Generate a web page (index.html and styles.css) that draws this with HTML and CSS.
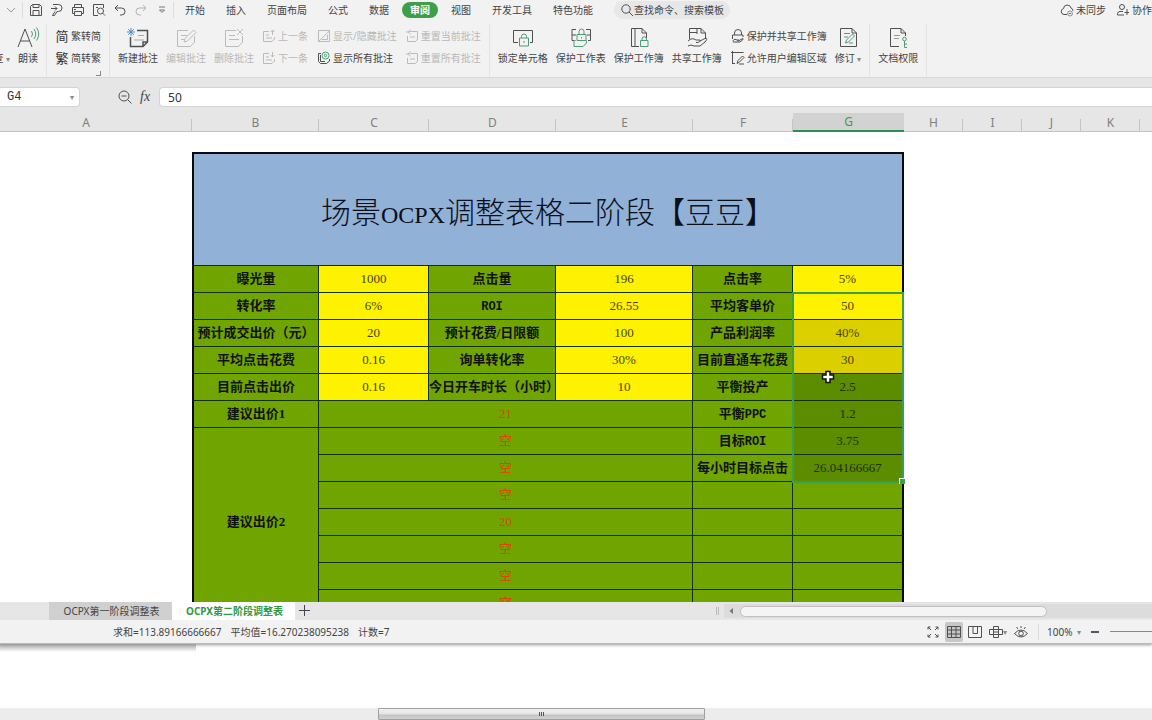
FILE: index.html
```html
<!DOCTYPE html>
<html lang="zh-CN">
<head>
<meta charset="utf-8">
<title>OCPX调整表</title>
<link rel="stylesheet" href="styles.css">
</head>
<body>
<main class="app">
  <header class="menubar">
    <div class="quick">
      <button class="qbtn" aria-label="更多"><svg viewBox="0 0 14 14"><path d="M3 5l4 4 4-4" stroke="#999"/></svg></button>
      <i class="vline"></i>
      <button class="qbtn" aria-label="保存"><svg viewBox="0 0 14 14"><path d="M1.5 12.500V3.500L3.500 1.500H10.500L12.500 3.500V12.500ZM4 1.500V4.500H10V1.500M4 12.500V7.500H10V12.500"/></svg></button>
      <button class="qbtn" aria-label="输出"><svg viewBox="0 0 14 14"><path d="M3 1.500H8.500A3.500 3.500 0 0 1 8.500 8.500H7L4.500 12.500H2.500L5 8.500M1 5.500H7M5 3.500L7 5.500L5 7.500"/></svg></button>
      <button class="qbtn" aria-label="打印"><svg viewBox="0 0 14 14"><path d="M3.500 4.500V1.500H10.500V4.500M3.500 10.500H1.500V4.500H12.500V10.500H10.500M3.500 8.500H10.500V12.500H3.500ZM3 6.500H5"/></svg></button>
      <button class="qbtn" aria-label="打印预览"><svg viewBox="0 0 14 14"><path d="M6 12.500H1.500V1.500H11.500V5M4 4.500H6"/><circle cx="8.500" cy="8" r="3"/><path d="M10.700 10.200L13 12.500"/></svg></button>
      <button class="qbtn" aria-label="撤销"><svg viewBox="0 0 14 14"><path d="M5 2L2 5L5 8M2 5H8.500A3.500 3.500 0 0 1 8.500 12H7"/></svg></button>
      <button class="qbtn faded" aria-label="恢复"><svg viewBox="0 0 14 14"><path d="M9 2L12 5L9 8M12 5H5.500A3.500 3.500 0 0 0 5.500 12H7"/></svg></button>
      <button class="qbtn" aria-label="自定义"><svg viewBox="0 0 14 14"><path d="M4 4H10M4.500 7L7 9.500L9.500 7Z" stroke="#777"/></svg></button>
      <i class="vline"></i>
    </div>
    <nav class="tabs">
      <a href="#">开始</a><a href="#">插入</a><a href="#">页面布局</a><a href="#">公式</a><a href="#">数据</a><a href="#" class="active">审阅</a><a href="#">视图</a><a href="#">开发工具</a><a href="#">特色功能</a>
      <button class="search"><svg viewBox="0 0 14 14"><circle cx="6" cy="6" r="4.200"/><path d="M9 9L13 13"/></svg>查找命令、搜索模板</button>
    </nav>
    <div class="account">
      <button><svg viewBox="0 0 14 14"><path d="M7 11.500H4A3 3 0 0 1 3.500 5.600A3.800 3.800 0 0 1 11 5A3 3 0 0 1 13 8"/><circle cx="10" cy="10.500" r="2.500" stroke="#8a8aa8"/><path d="M8.700 10.500H11.300" stroke="#6a6a98"/></svg>未同步</button>
      <button><svg viewBox="0 0 14 14"><circle cx="6" cy="4" r="2.500"/><path d="M8 12H1.500V10.500A2.500 2.500 0 0 1 4 8.500H7M11 6V12M8.500 9.500H13"/></svg>协作</button>
    </div>
  </header>

  <section class="ribbon" aria-label="审阅">
    <button class="big cut"><span class="icon"></span><span>查 <small>▾</small></span></button>
    <button class="big"><svg viewBox="0 0 24 24"><path d="M2 21L9 3L16 21M4.500 15H13.500"/><path class="g" d="M15.500 5Q17.500 8 15.500 11M18 3Q21.500 8 18 13M20.500 1.500Q25 8 20.500 14.500"/></svg><span>朗读</span></button>
    <i class="sep"></i>
    <div class="stack corner">
      <button><b class="glyph">简</b>繁转简</button>
      <button><b class="glyph">繁</b>简转繁</button>
    </div>
    <i class="sep"></i>
    <button class="big"><svg viewBox="0 0 24 24"><path d="M11 4.500H21.500V16L17 20.500H4.500V11M17 20.500V16H21.500" stroke-width="1.500"/><path d="M12 9.500H18M8 14H18" stroke="#aaa"/><path stroke="#4a90d0" d="M5 2V10M1 6H9M2.200 3.200L7.800 8.800M7.800 3.200L2.200 8.800"/></svg><span>新建批注</span></button>
    <button class="big" disabled><svg viewBox="0 0 24 24"><path d="M14 4.500H3.500V20.500H16.500L20.500 16V10M7 9.500H13M7 13.500H10M10 16L11 12.500L19.500 4L22 6.500L13.500 15Z"/></svg><span>编辑批注</span></button>
    <button class="big" disabled><svg viewBox="0 0 24 24"><path d="M14 4.500H3.500V20.500H16.500L20.500 16V10M7 9.500H13M7 13.500H17M15 3L21 9M21 3L15 9"/></svg><span>删除批注</span></button>
    <div class="stack">
      <button disabled><svg viewBox="0 0 14 14"><path d="M7 2.500H1.500V12.500H10L12.500 10V8M4 6H7M4 9H10M10.500 6V1M8.500 3L10.500 1L12.500 3"/></svg>上一条</button>
      <button disabled><svg viewBox="0 0 14 14"><path d="M7 2.500H1.500V12.500H10L12.500 10V8M4 6H7M4 9H10M10.500 1V6M8.500 4L10.500 6L12.500 4"/></svg>下一条</button>
    </div>
    <div class="stack wide">
      <button disabled><svg viewBox="0 0 14 14"><path d="M1.500 1.500H12.500V12.500H1.500ZM1.500 12.500L12.500 2M5 10.500H10.500V6"/></svg>显示/隐藏批注</button>
      <button><svg viewBox="0 0 14 14"><path d="M4 2.500H1.500V10.500L3.500 12.500H9.500L12.500 10V8M3.500 4V10.500H8"/><circle class="g" cx="8.500" cy="4.500" r="3.500"/><circle class="g" cx="8.500" cy="4.500" r="1.200"/></svg>显示所有批注</button>
    </div>
    <div class="stack">
      <button disabled><svg viewBox="0 0 14 14"><path d="M4.500 2.500H12.500V10L10.500 12.500H2.500V7M5.500 .500L3 3L5.500 5M3 3H1M5 8H10"/></svg>重置当前批注</button>
      <button disabled><svg viewBox="0 0 14 14"><path d="M4.500 2.500H12.500V10L10.500 12.500H2.500V7M5.500 .500L3 3L5.500 5M3 3H1M5 8H10"/></svg>重置所有批注</button>
    </div>
    <i class="sep"></i>
    <button class="big"><svg viewBox="0 0 24 24"><path d="M7 16.500H2.500V4.500H21.500V16.500H19"/><path class="g f" d="M8.500 12H17.500V20H8.500ZM10.500 12V10.500A2.500 2.500 0 0 1 15.500 10.500V12M13 15V17"/></svg><span>锁定单元格</span></button>
    <button class="big"><svg viewBox="0 0 24 24"><path d="M7 3.500H3V14.500H7M17 3.500H21.500V14.500H19M3 9H7M18 9H21.500"/><path class="g f" d="M8 8.500H17V14.500H8ZM10 8.500V5.500A2.500 2.500 0 0 1 15 5.500V8.500M5 14.500V20.500H14L17.500 17V14.500M12.500 11V12.500"/></svg><span>保护工作表</span></button>
    <button class="big"><svg viewBox="0 0 24 24"><path d="M12 20.500H4.500V2.500H15L19.500 7V12M8 2.500V20M15 2.500V7H19.500"/><path class="g f" d="M13.500 14.500H21V20.500H13.500ZM15 14.500V13A2.200 2.200 0 0 1 19.500 13V14.500"/></svg><span>保护工作簿</span></button>
    <button class="big"><svg viewBox="0 0 24 24"><path d="M4.500 13V2.500H16L20.500 7V13M12 2.500V8M4.500 6.500H12M16 2.500V7H20.500M3 15Q7 11 11 14H15Q16 16.500 11 16.500M15 15L21 12Q23 13 20 16L15 20H9Q6 18 3 20"/></svg><span>共享工作簿</span></button>
    <div class="stack wide">
      <button><svg viewBox="0 0 14 14"><path d="M3.500 6V4A3.500 3.500 0 0 1 10.500 4V6M1.500 10V6H12V8M1.500 12Q4 9 6 11H8Q8.500 12 6 12M8 11.500L12 9.500Q13 10.500 9 13H2"/></svg>保护并共享工作簿</button>
      <button><svg viewBox="0 0 14 14"><path d="M1.500 13V1.500H12.500M0 1.500H3M1.500 0V3M1.500 12.500H4M6 12.500L7 9.500L11.500 5L13 6.500L8.500 11ZM8 13H13"/></svg>允许用户编辑区域</button>
    </div>
    <button class="big"><svg viewBox="0 0 24 24"><path d="M4.500 2.500H16L20.500 7V20.500H4.500ZM16 2.500V7H20.500"/><path class="g" d="M8 7.500H14M8 11H12M9.500 17L10.500 14L16.500 8L18.500 10L12.500 16ZM13 17H17"/></svg><span>修订 <small>▾</small></span></button>
    <i class="sep"></i>
    <button class="big"><svg viewBox="0 0 24 24"><path d="M13 20.500H4.500V2.500H15L19.500 7V10M15 2.500V7H19.500"/><path d="M8 9.500H14M8 12.500H13" stroke="#999"/><circle class="g" cx="18.500" cy="13" r="1.800"/><path class="g" d="M18.500 15V21.500H21M18.500 18H21"/></svg><span>文档权限</span></button>
    <i class="sep"></i>
  </section>

  <section class="formula">
    <div class="namebox"><input class="cellname" aria-label="名称框" value="G4"><span>▾</span></div>
    <div class="fx">
      <svg viewBox="0 0 14 14"><circle cx="6" cy="6" r="5"/><path d="M3.500 6H8.500M9.500 9.500L13.500 13.500"/></svg>
      <i>fx</i>
    </div>
    <input class="value" aria-label="编辑栏" value="50">
  </section>

  <section class="sheet">
    <table>
      <colgroup><col class="cA"><col class="cB"><col class="cC"><col class="cD"><col class="cE"><col class="cF"><col class="cG"><col class="cH"><col class="cH"><col class="cH"><col class="cH"><col class="cH"></colgroup>
      <thead><tr><th class="first">A</th><th>B</th><th>C</th><th>D</th><th>E</th><th>F</th><th class="on">G</th><th>H</th><th>I</th><th>J</th><th>K</th><th></th></tr></thead>
      <tbody>
        <tr class="blank"><td colspan="12"></td></tr>
        <tr class="title"><td></td><td class="head" colspan="6">场景<span>OCPX</span>调整表格二阶段【豆豆】</td></tr>
        <tr><td></td><td class="k l">曝光量</td><td class="v">1000</td><td class="k">点击量</td><td class="v">196</td><td class="k">点击率</td><td class="v r">5%</td></tr>
        <tr><td></td><td class="k l">转化率</td><td class="v">6%</td><td class="k"><span>ROI</span></td><td class="v">26.55</td><td class="k">平均客单价</td><td class="v r anchor">50<span class="selection"></span></td></tr>
        <tr><td></td><td class="k l">预计成交出价（元）</td><td class="v">20</td><td class="k">预计花费/日限额</td><td class="v">100</td><td class="k">产品利润率</td><td class="v r dim">40%</td></tr>
        <tr><td></td><td class="k l">平均点击花费</td><td class="v">0.16</td><td class="k">询单转化率</td><td class="v">30%</td><td class="k">目前直通车花费</td><td class="v r dim">30</td></tr>
        <tr><td></td><td class="k l">目前点击出价</td><td class="v">0.16</td><td class="k">今日开车时长（小时）</td><td class="v">10</td><td class="k">平衡投产</td><td class="n r dim">2.5</td></tr>
        <tr><td></td><td class="k l">建议出价1</td><td class="red" colspan="3">21</td><td class="k">平衡<span>PPC</span></td><td class="n r dim">1.2</td></tr>
        <tr><td></td><td class="k l" rowspan="7">建议出价2</td><td class="red" colspan="3">空</td><td class="k">目标<span>ROI</span></td><td class="n r dim">3.75</td></tr>
        <tr><td></td><td class="red" colspan="3">空</td><td class="k">每小时目标点击</td><td class="n r dim">26.04166667</td></tr>
        <tr><td></td><td class="red" colspan="3">空</td><td class="k"></td><td class="n r"></td></tr>
        <tr><td></td><td class="red" colspan="3">20</td><td class="k"></td><td class="n r"></td></tr>
        <tr><td></td><td class="red" colspan="3">空</td><td class="k"></td><td class="n r"></td></tr>
        <tr><td></td><td class="red" colspan="3">空</td><td class="k"></td><td class="n r"></td></tr>
        <tr><td></td><td class="red" colspan="3">空</td><td class="k"></td><td class="n r"></td></tr>
      </tbody>
    </table>
    <svg class="pointer" viewBox="0 0 14 14"><path d="M5 1.500H9V5H12.500V9H9V12.500H5V9H1.500V5H5Z" fill="#fff" stroke="#111" stroke-width="1.500"/></svg>
  </section>

  <section class="sheetbar">
    <div class="sheets"><button>OCPX第一阶段调整表</button><button class="current">OCPX第二阶段调整表</button><button class="add" aria-label="新建工作表"><svg viewBox="0 0 12 12"><path d="M5.500 0V11M0 5.500H11"/></svg></button></div>
    <div class="hscroll"><i class="grip"></i><div class="track"><svg viewBox="0 0 6 8"><path d="M5 1L1.500 4L5 7Z"/></svg><div class="thumb"></div></div></div>
  </section>

  <footer class="status">
    <p><span>求和=113.89166666667</span><span>平均值=16.270238095238</span><span>计数=7</span></p>
    <div class="views">
      <button aria-label="全屏"><svg viewBox="0 0 14 14"><path d="M5 5L2 2M2 4.500V2H4.500M9 5L12 2M9.500 2H12V4.500M5 9L2 12M2 9.500V12H4.500M9 9L12 12M12 9.500V12H9.500"/></svg></button>
      <button class="sel" aria-label="普通视图"><svg viewBox="0 0 14 14"><path d="M.500 1.500H13.500V12.500H.500ZM.500 5H13.500M.500 9H13.500M4.500 1.500V12.500M9 1.500V12.500"/></svg></button>
      <button aria-label="分页预览"><svg viewBox="0 0 14 14"><path d="M.500 1.500H13.500V12.500H.500ZM5 1.500V8.500H9.500V1.500M9.500 8.500V1.500"/></svg></button>
      <button class="drop" aria-label="阅读模式"><svg viewBox="0 0 14 14"><path d="M4.500 1.500H9.500V12.500H4.500ZM.500 4.500H13.500V9.500H.500ZM4.500 7H9.500"/></svg><small>▾</small></button>
      <button aria-label="护眼模式"><svg viewBox="0 0 14 14"><path d="M.500 8.500Q7 1.500 13.500 8.500Q7 15.500 .500 8.500ZM7 1V3M2.500 2L4 4M11.500 2L10 4"/><circle cx="7" cy="8.500" r="2.300"/></svg></button>
      <i class="vline"></i>
      <button class="zoom">100% <small>▾</small></button>
      <button class="minus" aria-label="缩小"></button>
      <input type="range" aria-label="显示比例" value="50">
    </div>
  </footer>
</main>
<div class="desk"></div>
<div class="pagebar"><div class="pagethumb"><i></i><i></i><i></i></div></div>
</body>
</html>
```
FILE: styles.css
```css
* { box-sizing: border-box; }
body {
  margin: 0;
  height: 100vh;
  display: flex;
  flex-direction: column;
  overflow: hidden;
  background: #fff;
  color: #444;
  font: 10px/14px "Noto Sans", "Noto Sans CJK SC", sans-serif;
}
button { border: 0; padding: 0; background: none; color: inherit; font: inherit; white-space: nowrap; }
a { color: inherit; text-decoration: none; }
input { font: inherit; color: #333; border: 1px solid #d4d4d4; background: #fff; }
svg { display: block; flex: none; width: 14px; height: 14px; fill: none; stroke: #505050; stroke-width: 1; }
small { font-size: 8px; color: #888; }

.app { flex: 1; min-height: 0; display: flex; flex-direction: column; position: relative; box-shadow: 0 1px 3px #999; }

/* Menu bar */
.menubar { display: flex; align-items: center; flex: none; height: 19px; background: #f2f2f2; overflow: hidden; }
.quick { display: flex; align-items: center; gap: 7px; padding-left: 4px; }
.quick .vline { margin: 0 -1px 0 -3px; }
.vline { width: 1px; height: 16px; background: #dcdcdc; }
.faded { opacity: .4; }
.tabs { display: flex; align-items: center; gap: 21px; padding-left: 12px; white-space: nowrap; }
.tabs .active { background: #3f9f48; color: #fff; font-weight: 700; border-radius: 8px; padding: 1px 8px; margin: 0 -8px; }
.search { display: flex; align-items: center; height: 18px; padding: 0 6px; border-radius: 9px; background: #e7e7e7; }
.account { display: flex; gap: 10px; margin-left: auto; flex: none; }
.account button { display: flex; align-items: center; gap: 2px; }

/* Ribbon */
.ribbon { display: flex; gap: 8px; flex: none; height: 59px; padding-top: 5px; background: #f2f2f2; border-bottom: 1px solid #d8d8d8; overflow: hidden; }
.ribbon > * { flex: none; }
.sep { width: 1px; height: 52px; background: #e2e2e2; }
.big { display: flex; flex-direction: column; align-items: center; align-self: flex-start; gap: 1px; padding-top: 2px; }
.big svg, .big .icon { width: 24px; height: 24px; margin: 0 -2px; }
.big small { line-height: 8px; }
.cut { width: 10px; align-items: flex-end; overflow: hidden; }
.g { stroke: #4f9c78; }
.f { fill: #f2f2f2; }
.stack { display: flex; flex-direction: column; gap: 8px; padding-top: 5px; align-self: flex-start; }
.stack button { display: flex; align-items: center; gap: 2px; }
.wide { padding-left: 1px; }
.glyph { width: 14px; font-size: 13px; font-weight: 400; color: #333; }
.ribbon button:disabled { color: #b8b8b8; }
.ribbon button:disabled svg { stroke: #bbb; }
.corner::after { content: ""; width: 4px; height: 4px; margin-top: -2px; align-self: flex-end; border: solid #888; border-width: 0 1px 1px 0; }

/* Formula bar */
.formula { display: flex; align-items: center; flex: none; padding: 9px 0 6px; background: #e6e6e6; }
.namebox { display: flex; width: 80px; height: 20px; align-items: center; background: #fff; border: 1px solid #d4d4d4; border-left: 0; border-radius: 0 4px 4px 0; }
.cellname { width: 70px; height: 18px; padding: 0 0 0 7px; border: 0; background: none; font: 12px "Liberation Mono", monospace; }
.namebox span { font-size: 8px; color: #888; }
.fx { display: flex; align-items: center; gap: 8px; padding: 0 9px 0 38px; }
.fx i { font: italic 14px/16px "Liberation Serif", serif; }
.value { flex: 1; min-width: 0; height: 20px; padding: 0 0 0 8px; border-right: 0; border-radius: 4px 0 0 4px; font-size: 12px; }

/* Grid */
.sheet { flex: 1; min-height: 0; overflow: hidden; position: relative; background: #fff; }
table { table-layout: fixed; width: 1199px; border-collapse: separate; border-spacing: 0; }
.cA { width: 192px; }
.cB, .cD { width: 127px; }
.cC, .cG { width: 110px; }
.cE { width: 137px; }
.cF { width: 100px; }
.cG { width: 111px; }
.cH { width: 59px; }
td, th { padding: 0; overflow: hidden; white-space: nowrap; text-align: center; }
th { height: 19px; font-weight: 400; font-size: 12px; line-height: 17px; color: #808080; border-bottom: 1px solid #c4c4c4; background: linear-gradient(#c4c4c4, #c4c4c4) right bottom / 1px 12px no-repeat #e6e6e6; }
.first { padding-right: 20px; }
th.on { background: #d2d2d2; color: #3f9f48; border-bottom: 2px solid #2f8f50; }
td { height: 27px; }
.blank td { height: 20px; }
.title td { height: 114px; }
.k, .v, .n, .red { border: solid #10300a; border-width: 0 1px 1px 0; background: #70a400; color: #111; font: 13px/16px "Liberation Serif", "Noto Sans CJK SC", serif; }
.k { font-weight: 700; }
.k span { font: 700 12px "Liberation Mono", monospace; }
.l { border-left: 2px solid #0a0a10; }
.r { border-right: 2px solid #0a0a10; }
.v { background: #fff200; color: #4a4400; }
.n { color: #222c00; }
.red { color: #d84800; }
.dim.v { background: #dccf00; }
.dim.n { background: #5c8c00; }
.head { background: #92b1d7; color: #0a0f1c; border: 2px solid #0a0a10; border-bottom: 1px solid #10300a; font: 300 30px/40px "Noto Sans CJK SC", sans-serif; }
.head span { font: 24px "Liberation Serif", serif; }
.anchor { position: relative; overflow: visible; }
.selection { position: absolute; top: -1px; left: -1px; right: -2px; height: 191px; border: 2px solid #36a04c; pointer-events: none; }
.selection::after { content: ""; position: absolute; right: -3px; bottom: -3px; width: 5px; height: 5px; background: #36a04c; border: solid #fff; border-width: 1px 0 0 1px; }
.pointer { position: absolute; left: 821px; top: 257px; }

/* Sheet tabs */
.sheetbar { display: flex; justify-content: space-between; flex: none; height: 18px; background: #e6e6e6; overflow: hidden; }
.sheets { display: flex; padding-left: 49px; }
.sheets button { width: 123px; padding-left: 2px; background: #d0d0d0; }
.sheets .current { background: #fff; color: #2f9a40; font-weight: 700; }
.sheets .add { display: flex; align-items: center; justify-content: center; width: 20px; padding: 0; background: none; }
.add svg { width: 12px; height: 12px; stroke: #445; }
.hscroll { display: flex; align-items: center; gap: 5px; width: 436px; }
.grip { width: 3px; height: 8px; border: solid #bbb; border-width: 0 1px; }
.track { flex: 1; display: flex; align-items: center; gap: 6px; height: 14px; padding-left: 4px; background: #dcdcdc; }
.track svg { width: 6px; height: 8px; fill: #777; stroke: none; }
.thumb { width: 307px; height: 11px; border: 1px solid #c0c0c0; border-radius: 6px; background: #f4f4f4; }

/* Status bar */
.status { display: flex; align-items: center; justify-content: space-between; flex: none; height: 24px; padding-left: 113px; background: #f2f2f2; border-bottom: 1px solid #bbb; overflow: hidden; }
.status p { display: flex; gap: 9px; margin: 0; white-space: nowrap; }
.views { display: flex; align-items: center; gap: 3px; height: 24px; overflow: hidden; flex: none; width: 228px; }
.views > * { flex: none; }
.views button { display: flex; align-items: center; height: 20px; padding: 0 2px; }
.views .sel { background: #c8c8c8; border-radius: 2px; }
.views .vline { margin-left: 5px; }
.views .zoom { gap: 5px; padding-left: 5px; }
.views .minus { width: 8px; height: 2px; margin: 0 8px 0 5px; padding: 0; background: #556; }
.status input { appearance: none; width: 160px; height: 1px; margin: 0; border: 0; background: #888; }
.status input::-webkit-slider-thumb { appearance: none; width: 8px; height: 8px; background: #fff; }

/* Area below the window */
.desk { flex: none; height: 64px; background: linear-gradient(#aaa, #fff) left top / 196px 8px no-repeat #fff; }
.pagebar { flex: none; height: 12px; background: #ececec; padding-left: 378px; }
.pagethumb { display: flex; justify-content: center; gap: 1px; width: 327px; height: 12px; padding-top: 3px; border: 1px solid #a0a0a0; border-radius: 1px; background: linear-gradient(#f2f2f2, #e4e4e4 50%, #c4c4c4 60%, #d0d0d0); }
.pagethumb i { width: 1px; height: 4px; background: #555; }
```
